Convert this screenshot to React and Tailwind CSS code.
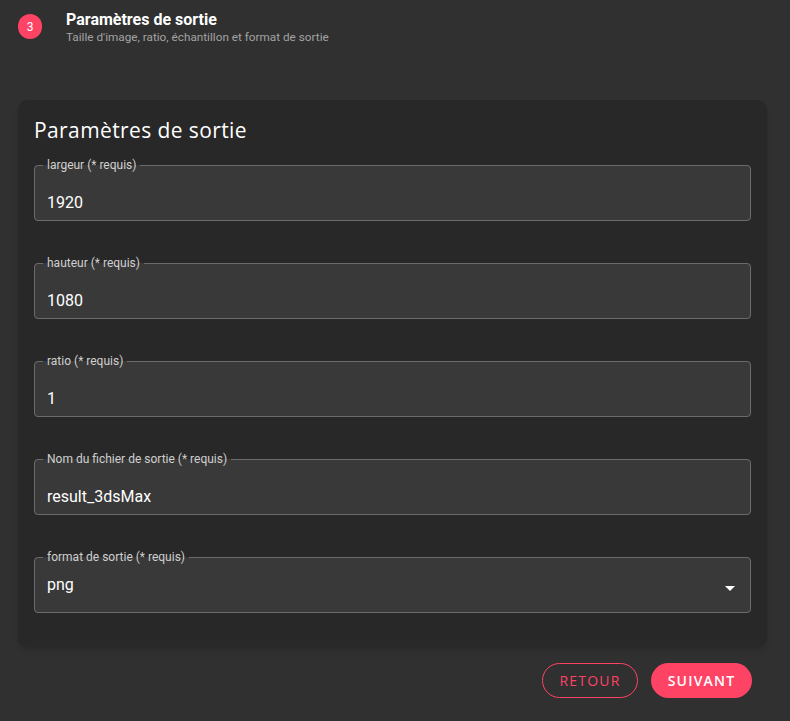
const fields = [
  { label: 'largeur (* requis)', value: '1920' },
  { label: 'hauteur (* requis)', value: '1080' },
  { label: 'ratio (* requis)', value: '1' },
  { label: 'Nom du fichier de sortie (* requis)', value: 'result_3dsMax' },
];

function Field({ label, value, select }) {
  return (
    <fieldset className="rounded border border-[#6b6b6b] bg-[#393939] px-2 min-w-0">
      <legend className="px-[4px] text-[12px] leading-[14px] text-[#cfcfcf]">{label}</legend>
      <div
        className={`flex items-center justify-between px-[4px] text-[16px] leading-[20px] text-white ${
          select ? 'pt-[11px] pb-[17px]' : 'pt-[21px] pb-[7px]'
        }`}
      >
        <span>{value}</span>
        {select && (
          <svg width="24" height="24" viewBox="0 0 24 24" className="relative top-[3px] -my-[2px] -mr-[4px]">
            <path d="M7 10l5 5 5-5z" fill="#ffffff" />
          </svg>
        )}
      </div>
    </fieldset>
  );
}

export default function App() {
  return (
    <div className="min-h-[721px] w-[790px] bg-[#303030] font-['Roboto',sans-serif]">
      <div className="flex items-start px-[18px] pt-[14px]">
        <div className="flex h-[25px] w-[24px] shrink-0 items-center justify-center rounded-full bg-[#ff4364] text-[12px] text-white">
          3
        </div>
        <div className="ml-[24px] -mt-[4px]">
          <div className="text-[16px] font-bold leading-[20px] text-white">Paramètres de sortie</div>
          <div className="text-[11.75px] leading-[14px] text-[#a3a3a3]">
            Taille d'image, ratio, échantillon et format de sortie
          </div>
        </div>
      </div>

      <div className="ml-[18px] mr-[23px] mt-[56px] rounded-[10px] bg-[#282828] px-4 pb-[34px] pt-[15px] shadow-md">
        <h2 className="mb-[13px] font-['Open_Sans',sans-serif] text-[21px] font-medium leading-[30px] tracking-[0.4px] text-white">
          Paramètres de sortie
        </h2>
        <div className="flex flex-col gap-[35px]">
          {fields.map((f) => (
            <Field key={f.label} label={f.label} value={f.value} />
          ))}
          <Field label="format de sortie (* requis)" value="png" select />
        </div>
      </div>

      <div className="mt-[16px] flex justify-end gap-[13px] pr-[38px]">
        <button className="h-[35px] w-[96px] rounded-full border border-[#ff4364] font-['Open_Sans',sans-serif] text-[14px] font-medium tracking-[1.2px] text-[#ff4364]">
          RETOUR
        </button>
        <button className="h-[35px] w-[101px] rounded-full bg-[#ff4364] font-['Open_Sans',sans-serif] text-[14px] font-semibold tracking-[1.2px] text-white">
          SUIVANT
        </button>
      </div>
    </div>
  );
}
